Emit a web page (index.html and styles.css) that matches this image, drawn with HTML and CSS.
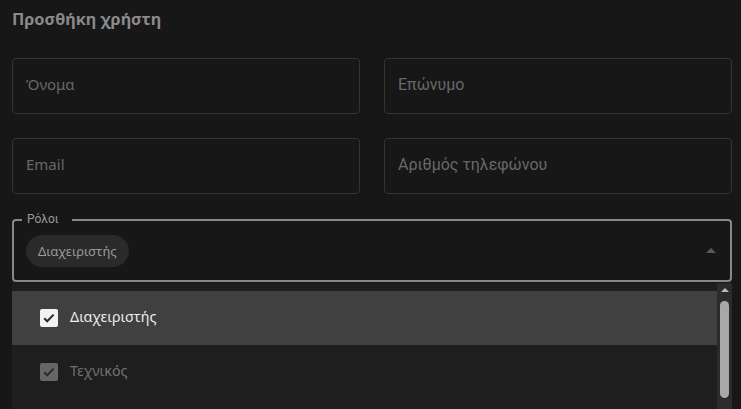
FILE: index.html
```html
<!DOCTYPE html>
<html lang="el">
<head>
<meta charset="utf-8">
<link rel="stylesheet" href="styles.css">
</head>
<body>
<div class="page">
  <h1 class="title">Προσθήκη χρήστη</h1>
  <div class="grid">
    <div class="field"><span class="ph noto">Όνομα</span></div>
    <div class="field"><span class="ph roboto">Επώνυμο</span></div>
    <div class="field"><span class="ph noto">Email</span></div>
    <div class="field"><span class="ph roboto">Αριθμός τηλεφώνου</span></div>
  </div>
  <div class="roles">
    <span class="legend">Ρόλοι</span>
    <span class="chip">Διαχειριστής</span>
    <svg class="arrow" width="24" height="24" viewBox="0 0 24 24"><path d="m7 14 5-5 5 5z" fill="#5a5a5a"/></svg>
  </div>
  <div class="dropdown">
    <ul class="options">
      <li class="option active">
        <span class="cb cb-on"><svg width="18" height="18" viewBox="0 0 18 18"><path d="M4.2 9.2l3 3 6.4-6.6" fill="none" stroke="#2a2a2a" stroke-width="2"/></svg></span>
        <span class="opt-text">Διαχειριστής</span>
      </li>
      <li class="option disabled">
        <span class="cb cb-dis"><svg width="18" height="18" viewBox="0 0 18 18"><path d="M4.2 9.2l3 3 6.4-6.6" fill="none" stroke="#2a2a2a" stroke-width="2"/></svg></span>
        <span class="opt-text">Τεχνικός</span>
      </li>
    </ul>
    <div class="scrollbar">
      <span class="sb-arrow"></span>
      <span class="sb-thumb"></span>
    </div>
  </div>
</div>
</body>
</html>
```

FILE: styles.css
```css
html, body {
  margin: 0;
  padding: 0;
  background: #171717;
  overflow: hidden;
}
.page {
  width: 720px;
  padding: 0 9px 0 12px;
  font-family: "Noto Sans", sans-serif;
}
.title {
  margin: 0;
  padding-top: 7px;
  height: 58px;
  box-sizing: border-box;
  font-size: 16.3px;
  line-height: 24px;
  font-weight: 700;
  color: #8a8a8a;
}
.grid {
  display: grid;
  grid-template-columns: 348px 348px;
  column-gap: 24px;
  row-gap: 24px;
}
.field {
  height: 56px;
  box-sizing: border-box;
  border: 1px solid #333333;
  border-radius: 4px;
  display: flex;
  align-items: center;
  padding-left: 13px;
  padding-bottom: 4px;
}
.ph {
  color: #686868;
}
.noto { font-family: "Noto Sans", sans-serif; font-size: 15px; }
.roboto { font-family: Roboto, sans-serif; font-size: 16px; }
.roles {
  position: relative;
  margin-top: 25px;
  height: 63px;
  box-sizing: border-box;
  border: 2px solid #888888;
  border-radius: 4px;
  display: flex;
  align-items: center;
  padding-left: 12px;
}
.legend {
  position: absolute;
  left: 8px;
  top: -10px;
  padding: 0 13px 0 5px;
  background: #171717;
  font-family: Roboto, sans-serif;
  font-size: 12px;
  line-height: 16px;
  color: #999999;
}
.chip {
  height: 32px;
  line-height: 32px;
  padding: 0 12px;
  border-radius: 16px;
  background: #2a2a2a;
  color: #9a9a9a;
  font-size: 13px;
}
.arrow {
  margin-left: auto;
  margin-right: 7px;
}
.dropdown {
  margin-top: 1px;
  height: 130px;
  background: #1e1e1e;
  display: flex;
}
.options {
  list-style: none;
  margin: 0;
  padding: 8px 0 0;
  flex: 1;
}
.option {
  height: 54px;
  display: flex;
  align-items: center;
  padding-left: 28px;
}
.option.active { background: #404040; }
.cb {
  width: 18px;
  height: 18px;
  border-radius: 2px;
  display: flex;
  flex: none;
}
.cb-on { background: #f2f2f2; }
.cb-dis { background: #666666; }
.opt-text {
  margin-left: 12px;
  font-size: 14.3px;
  padding-bottom: 3px;
}
.active .opt-text { color: #ececec; }
.disabled .opt-text { color: #707070; }
.scrollbar {
  width: 15px;
  background: #2b2b2b;
  display: flex;
  flex-direction: column;
  align-items: center;
}
.sb-arrow {
  margin-top: 5px;
  width: 0;
  height: 0;
  border-left: 4px solid transparent;
  border-right: 4px solid transparent;
  border-bottom: 4px solid #b8b8b8;
}
.sb-thumb {
  margin-top: 9px;
  width: 9px;
  height: 97px;
  border-radius: 5px;
  background: #a8a8a8;
}
```
